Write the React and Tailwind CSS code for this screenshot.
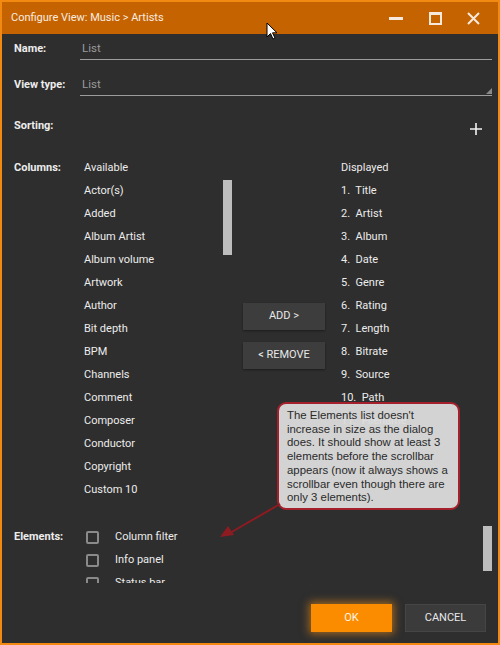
import React from "react";

const available = [
  "Actor(s)", "Added", "Album Artist", "Album volume", "Artwork", "Author", "Bit depth",
  "BPM", "Channels", "Comment", "Composer", "Conductor", "Copyright", "Custom 10",
];
const displayed = [
  "Title", "Artist", "Album", "Date", "Genre", "Rating", "Length", "Bitrate", "Source", "Path", "Filename",
];

function Checkbox() {
  return <div className="w-[13px] h-[13px] rounded-[2px] border-2 border-[#8a8a8a] shrink-0" />;
}

export default function App() {
  return (
    <div
      className="relative w-[500px] h-[645px] border-2 border-[#f28a12] bg-[#2e2e2e] flex flex-col overflow-hidden text-[#ececec]"
      style={{ fontFamily: "Roboto, 'Liberation Sans', sans-serif" }}
    >
      {/* Title bar */}
      <div className="h-[32px] bg-[#c56300] flex items-center pl-[9px] shrink-0">
        <div className="text-[11px] text-[#f8ece0] flex-1">Configure View: Music &gt; Artists</div>
        <div className="flex items-center h-full">
          <div className="w-[40px] flex justify-center">
            <div className="w-[14px] h-[3px] bg-[#f6e8dc]" />
          </div>
          <div className="w-[38px] flex justify-center">
            <div className="w-[13px] h-[13px] border-2 border-t-[3px] border-[#f6e8dc]" />
          </div>
          <div className="w-[38px] flex justify-center">
            <svg width="13" height="13" viewBox="0 0 13 13">
              <path d="M1 1 L12 12 M12 1 L1 12" stroke="#f6e8dc" strokeWidth="2" />
            </svg>
          </div>
          <div className="w-[6px]" />
        </div>
      </div>

      {/* Body */}
      <div className="flex flex-col pl-[12px] pr-[6px] flex-1">
        {/* Name */}
        <div className="flex items-center mt-[5px] h-[21px]">
          <div className="w-[66px] text-[11px] font-bold">Name:</div>
          <div className="flex-1 h-[21px] border-b border-[#9c9c9c] flex items-center pl-[2px] text-[11.5px] text-[#9a9a9a]">
            List
          </div>
        </div>
        {/* View type */}
        <div className="flex items-center mt-[15px] h-[21px]">
          <div className="w-[66px] text-[11px] font-bold">View type:</div>
          <div className="relative flex-1 h-[21px] border-b border-[#9c9c9c] flex items-center pl-[2px] text-[11.5px] text-[#9a9a9a]">
            List
            <svg className="absolute right-0 bottom-[1px]" width="6" height="6" viewBox="0 0 6 6">
              <path d="M6 0 L6 6 L0 6 Z" fill="#8a8a8a" />
            </svg>
          </div>
        </div>
        {/* Sorting */}
        <div className="flex items-center mt-[20px] h-[20px]">
          <div className="w-[66px] text-[11px] font-bold">Sorting:</div>
          <div className="flex-1" />
          <svg className="mt-[6px] mr-[10px]" width="12" height="12" viewBox="0 0 12 12">
            <path d="M6 0 V12 M0 6 H12" stroke="#f2f2f2" strokeWidth="1.6" />
          </svg>
        </div>

        {/* Columns */}
        <div className="flex mt-[20px]">
          <div className="w-[66px] text-[11px] font-bold h-[24px] flex items-center">Columns:</div>
          <div className="w-[152px] flex flex-col">
            <div className="h-[24px] flex items-center pl-[4px] text-[11px]">Available</div>
            <div className="flex">
              <div className="flex-1 flex flex-col pl-[4px]">
                {available.map((a) => (
                  <div key={a} className="h-[23px] flex items-center text-[11px]">{a}</div>
                ))}
              </div>
              <div className="w-[9px]">
                <div className="h-[75px] bg-[#bdbdbd]" />
              </div>
            </div>
          </div>
          <div className="ml-[11px] w-[82px] flex flex-col gap-[12px] mt-[147px]">
            <div className="h-[27px] bg-[#3d3d3d] shadow-[0_1px_2px_rgba(0,0,0,0.4)] flex items-center justify-center text-[11px] text-[#e8e8e8]">ADD &gt;</div>
            <div className="h-[27px] bg-[#3d3d3d] shadow-[0_1px_2px_rgba(0,0,0,0.4)] flex items-center justify-center text-[11px] text-[#e8e8e8]">&lt; REMOVE</div>
          </div>
          <div className="ml-[16px] flex flex-col">
            <div className="h-[24px] flex items-center text-[11px]">Displayed</div>
            {displayed.map((d, i) => (
              <div key={d} className="h-[23px] flex items-center text-[11px] whitespace-pre">
                {`${i + 1}.  ${d}`}
              </div>
            ))}
          </div>
        </div>

        {/* Elements */}
        <div className="flex mt-[24px]">
          <div className="w-[66px] text-[11px] font-bold h-[23px] flex items-center">Elements:</div>
          <div className="flex-1 h-[57px] overflow-hidden flex">
            <div className="flex-1 flex flex-col pl-[6px]">
              {["Column filter", "Info panel", "Status bar"].map((e) => (
                <div key={e} className="h-[23px] shrink-0 flex items-center text-[11px]">
                  <Checkbox />
                  <span className="ml-[16px]">{e}</span>
                </div>
              ))}
            </div>
            <div className="w-[9px] h-[45px] bg-[#bdbdbd]" />
          </div>
        </div>

        {/* Footer */}
        <div className="mt-auto mb-[11px] flex justify-end gap-[13px] pr-[6px]">
          <div className="w-[81px] h-[28px] bg-[#fb8c00] shadow-[0_0_8px_2px_rgba(255,150,20,0.55)] flex items-center justify-center text-[11px] text-[#fff4e6]">OK</div>
          <div className="w-[81px] h-[28px] bg-[#3b3b3b] border border-[#454545] flex items-center justify-center text-[11px] text-[#e8e8e8]">CANCEL</div>
        </div>
      </div>

      {/* Annotation callout */}
      <div
        className="absolute left-[275px] top-[400px] w-[183px] h-[108px] rounded-[9px] border-2 border-[#a4202c] bg-[#dcdcdc]/95 pl-[8px] pr-[4px] pt-[5px] text-[11.4px] leading-[13.7px] text-[#2a2a2a]"
        style={{ fontFamily: "'Liberation Sans', Arial, sans-serif" }}
      >
        The Elements list doesn't increase in size as the dialog does. It should show at least 3 elements before the scrollbar appears (now it always shows a scrollbar even though there are only 3 elements).
      </div>
      <svg className="absolute left-0 top-0 pointer-events-none" width="500" height="645" viewBox="0 0 500 645">
        <path d="M278 502 L228 531" stroke="#8e1b22" strokeWidth="2" />
        <path d="M218 535 L226 524 L232 533 Z" fill="#8e1b22" />
      </svg>

      {/* Mouse cursor */}
      <svg className="absolute left-[264px] top-[20px]" width="13" height="19" viewBox="0 0 13 19">
        <path d="M1 1 L1 15 L4.5 11.5 L7 17 L9 16 L6.5 10.8 L11 10.8 Z" fill="#ffffff" stroke="#000" strokeWidth="1" strokeLinejoin="round" />
      </svg>
    </div>
  );
}
